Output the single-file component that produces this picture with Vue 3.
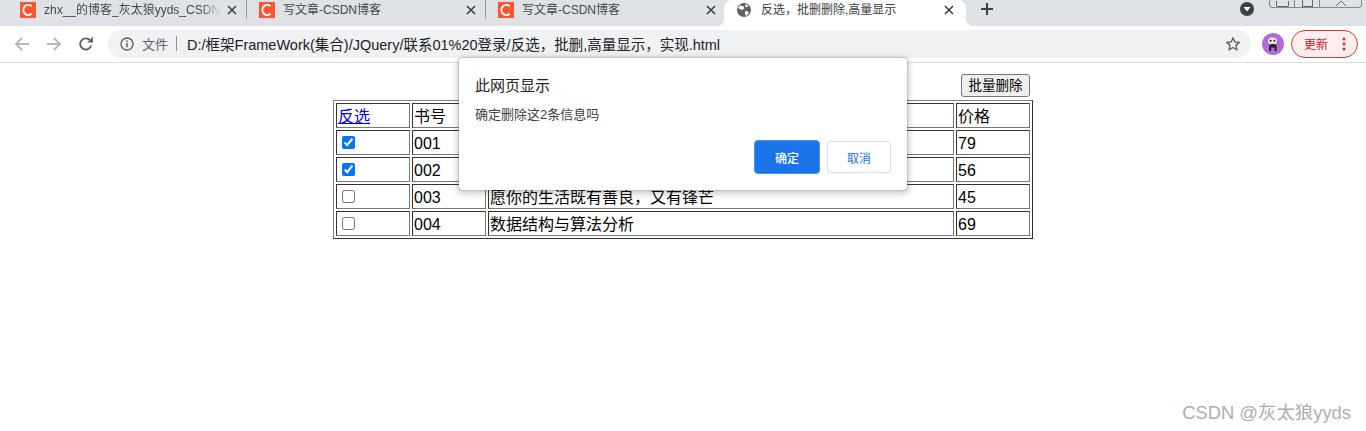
<script setup>
const tabs = [
  { title: 'zhx__的博客_灰太狼yyds_CSDN博客', fade: true },
  { title: '写文章-CSDN博客' },
  { title: '写文章-CSDN博客' },
]
const rows = [
  { id: '001', name: '', price: 79, checked: true },
  { id: '002', name: '', price: 56, checked: true },
  { id: '003', name: '愿你的生活既有善良，又有锋芒', price: 45, checked: false },
  { id: '004', name: '数据结构与算法分析', price: 69, checked: false },
]
</script>

<template>
  <div class="screen">
    <header class="strip">
      <div v-for="(t, i) in tabs" :key="i" class="tab">
        <svg class="fav" width="16" height="16" viewBox="0 0 16 16">
          <rect width="16" height="16" fill="#fc5531" />
          <path d="M11.6 4.2A5 5 0 1 0 11.6 11.8" fill="none" stroke="#fff" stroke-width="2" />
        </svg>
        <span class="tab-title" :class="{ fade: t.fade }">{{ t.title }}</span>
        <svg class="close" width="10" height="10" viewBox="0 0 10 10">
          <path d="M1 1l8 8M9 1l-8 8" stroke="#3c4043" stroke-width="1.6" />
        </svg>
      </div>
      <div class="tab active">
        <svg class="fav" width="14" height="14" viewBox="0 0 14 14">
          <circle cx="7" cy="7" r="7" fill="#5f6368" />
          <path d="M3 2.5l3 .5 1.5 2-2 2-3-1-1.3-1.5zM8 8l3 .6.8 1.4L9.5 13 8 11zM8.5 1l3 2-1.4 1.2-2-1z" fill="#fff" />
        </svg>
        <span class="tab-title">反选，批删删除,高量显示</span>
        <svg class="close" width="10" height="10" viewBox="0 0 10 10">
          <path d="M1 1l8 8M9 1l-8 8" stroke="#3c4043" stroke-width="1.6" />
        </svg>
      </div>
      <svg class="plus" width="14" height="14" viewBox="0 0 14 14">
        <path d="M7 1v12M1 7h12" stroke="#3c4043" stroke-width="2" />
      </svg>
      <div class="strip-right">
        <svg width="16" height="16" viewBox="0 0 16 16">
          <circle cx="8" cy="8" r="7" fill="#3c4043" />
          <path d="M4.5 6h7L8 10.5z" fill="#fff" />
        </svg>
        <div class="win-controls">
          <span class="win-btn first"><i class="w-min"></i></span>
          <span class="win-btn second"><i class="w-res"></i></span>
          <span class="win-btn third">
            <svg width="16" height="8" viewBox="0 0 16 8"><path d="M3 7l5-5 5 5" fill="none" stroke="#666" /></svg>
          </span>
        </div>
      </div>
    </header>

    <nav class="toolbar">
      <svg class="nav-ic back" width="16" height="16" viewBox="0 0 16 16">
        <path d="M15 8H2M8 2L2 8l6 6" fill="none" stroke="#b4b7bb" stroke-width="1.8" />
      </svg>
      <svg class="nav-ic forward" width="16" height="16" viewBox="0 0 16 16">
        <path d="M1 8h13M8 2l6 6-6 6" fill="none" stroke="#b4b7bb" stroke-width="1.8" />
      </svg>
      <svg class="nav-ic reload" width="16" height="16" viewBox="0 0 16 16">
        <path d="M13.2 9.5A5.6 5.6 0 1 1 12 4.2" fill="none" stroke="#5f6368" stroke-width="1.9" />
        <path d="M9.2 6.5H15V.8z" fill="#5f6368" />
      </svg>
      <div class="omnibox">
        <svg width="14" height="14" viewBox="0 0 14 14">
          <circle cx="7" cy="7" r="6" fill="none" stroke="#5f6368" stroke-width="1.4" />
          <path d="M7 6v4.2M7 3.6v1.4" stroke="#5f6368" stroke-width="1.5" />
        </svg>
        <span class="scheme">文件</span>
        <span class="divider"></span>
        <span class="url">D:/框架FrameWork(集合)/JQuery/联系01%20登录/反选，批删,高量显示，实现.html</span>
        <svg class="star" width="16" height="16" viewBox="0 0 16 16">
          <path d="M8 1.8l1.8 4.2 4.6.4-3.5 3 1.1 4.5L8 11.5l-4 2.4 1.1-4.5-3.5-3 4.6-.4z" fill="none" stroke="#5f6368" stroke-width="1.4" stroke-linejoin="round" />
        </svg>
      </div>
      <svg class="avatar" width="22" height="22" viewBox="0 0 22 22">
        <circle cx="11" cy="11" r="11" fill="#b36ad8" />
        <ellipse cx="10.5" cy="8" rx="4.5" ry="3.6" fill="#e8e8e8" />
        <circle cx="8.6" cy="7.8" r="1" fill="#222" />
        <circle cx="12.4" cy="7.8" r="1" fill="#222" />
        <path d="M7.2 18V13q0-2 3.6-2t3.8 2v5h-2v-3.5h-3.4V18z" fill="#222" />
      </svg>
      <div class="update">
        <span>更新</span>
        <svg width="4" height="14" viewBox="0 0 4 14">
          <circle cx="2" cy="2" r="1.5" fill="#d93025" />
          <circle cx="2" cy="7" r="1.5" fill="#d93025" />
          <circle cx="2" cy="12" r="1.5" fill="#d93025" />
        </svg>
      </div>
    </nav>

    <main class="page">
      <div class="content">
        <div class="actions"><button class="batch">批量删除</button></div>
        <table class="books">
          <colgroup>
            <col class="c1" /><col class="c2" /><col class="c3" /><col class="c4" />
          </colgroup>
          <tbody>
            <tr>
              <td><a class="invert" href="#">反选</a></td>
              <td>书号</td>
              <td></td>
              <td>价格</td>
            </tr>
            <tr v-for="r in rows" :key="r.id">
              <td><input type="checkbox" :checked="r.checked" /></td>
              <td>{{ r.id }}</td>
              <td>{{ r.name }}</td>
              <td>{{ r.price }}</td>
            </tr>
          </tbody>
        </table>
      </div>
      <div class="watermark">CSDN @灰太狼yyds</div>
    </main>

    <div class="dialog">
      <div class="d-title">此网页显示</div>
      <div class="d-msg">确定删除这2条信息吗</div>
      <div class="d-actions">
        <button class="ok">确定</button>
        <button class="cancel">取消</button>
      </div>
    </div>
  </div>
</template>

<style scoped>
.screen {
  position: relative;
  width: 1366px;
  height: 431px;
  overflow: hidden;
  background: #fff;
  font-family: "Liberation Sans", "Noto Sans CJK SC", sans-serif;
  color: #000;
}
.strip {
  display: flex;
  align-items: flex-start;
  height: 26px;
  padding-left: 8px;
  background: #dee1e6;
  box-sizing: border-box;
}
.tab {
  position: relative;
  display: flex;
  align-items: center;
  width: 239px;
  height: 19px;
  padding: 0 9px 0 12px;
  box-sizing: border-box;
  flex: none;
  border-right: 1px solid #9a9da1;
}
.tab:nth-child(3) {
  border-right: none;
}
.tab.active {
  width: 242px;
  height: 26px;
  margin-left: -1px;
  padding: 0 12px 7px 13px;
  background: #fff;
  border-right: none;
  border-radius: 8px 8px 0 0;
}
.tab.active::before,
.tab.active::after {
  content: "";
  position: absolute;
  bottom: 0;
  width: 8px;
  height: 8px;
}
.tab.active::before {
  left: -8px;
  background: radial-gradient(circle at 0 0, #dee1e6 8px, #fff 8.5px);
}
.tab.active::after {
  right: -8px;
  background: radial-gradient(circle at 100% 0, #dee1e6 8px, #fff 8.5px);
}
.fav {
  flex: none;
}
.tab-title {
  flex: 1;
  min-width: 0;
  margin-left: 8px;
  overflow: hidden;
  white-space: nowrap;
  font-size: 12px;
  line-height: 18px;
  color: #45484c;
}
.tab-title.fade {
  -webkit-mask-image: linear-gradient(to right, #000 88%, transparent 100%);
  mask-image: linear-gradient(to right, #000 88%, transparent 100%);
}
.active .tab-title {
  margin-left: 10px;
  color: #3c4043;
}
.close {
  flex: none;
  margin-left: 6px;
}
.plus {
  flex: none;
  margin: 2px 0 0 14px;
}
.strip-right {
  display: flex;
  align-items: flex-start;
  margin-left: auto;
  margin-right: 4px;
}
.strip-right > svg {
  margin-top: 1px;
}
.win-controls {
  display: flex;
  width: 93px;
  height: 8px;
  margin-left: 14px;
  border: 1px solid #85888c;
  border-top: none;
  border-radius: 0 0 4px 4px;
  box-sizing: border-box;
}
.win-btn {
  display: flex;
  justify-content: center;
  align-items: flex-end;
  overflow: hidden;
  box-sizing: border-box;
  border-right: 1px solid #85888c;
}
.first { width: 25px; }
.second { width: 25px; }
.third { flex: 1; border-right: none; }
.w-min {
  display: block;
  width: 13px;
  height: 6px;
  border: 1px solid #666;
  border-top-width: 0;
  box-sizing: border-box;
  border-radius: 0 0 2px 2px;
}
.w-res {
  display: block;
  width: 11px;
  height: 7px;
  border: 1px solid #666;
  border-top-width: 0;
  box-sizing: border-box;
}
.toolbar {
  display: flex;
  align-items: center;
  height: 37px;
  padding-bottom: 1px;
  background: #fff;
  border-bottom: 1px solid #dadce0;
  box-sizing: border-box;
}
.nav-ic {
  flex: none;
}
.back { margin-left: 14px; }
.forward { margin-left: 16px; }
.reload { margin-left: 16px; }
.omnibox {
  display: flex;
  align-items: center;
  width: 1143px;
  height: 28px;
  margin-left: 14px;
  padding-left: 12px;
  background: #eff1f3;
  border-radius: 14px;
  box-sizing: border-box;
  flex: none;
}
.scheme {
  margin-left: 8px;
  font-size: 13px;
  color: #5f6368;
}
.divider {
  width: 1px;
  height: 15px;
  margin: 0 10px 0 8px;
  background: #8d9195;
}
.url {
  font-size: 14.5px;
  color: #202124;
  white-space: nowrap;
}
.star {
  margin-left: auto;
  margin-right: 10px;
}
.avatar {
  flex: none;
  margin-left: 11px;
}
.update {
  display: flex;
  align-items: center;
  justify-content: space-between;
  width: 67px;
  height: 28px;
  margin-left: 7px;
  padding: 0 11px 0 12px;
  background: #fdeeee;
  border: 1px solid #d33a30;
  border-radius: 14px;
  box-sizing: border-box;
  font-size: 12px;
  color: #c5221f;
  flex: none;
}
.page {
  position: relative;
  height: 368px;
}
.content {
  width: 700px;
  margin-left: 333px;
  padding-top: 11px;
}
.actions {
  display: flex;
  justify-content: flex-end;
  height: 23px;
  margin-bottom: 3px;
  padding-right: 3px;
}
.batch {
  width: 69px;
  height: 23px;
  padding: 0;
  background: #efefef;
  border: 1px solid #767676;
  border-radius: 3px;
  font-family: inherit;
  font-size: 13.5px;
  line-height: 20px;
  color: #000;
}
.books {
  table-layout: fixed;
  width: 700px;
  border-collapse: separate;
  border-spacing: 2px;
  border: 1px solid;
  border-color: #808080 #333 #333 #808080;
  box-sizing: border-box;
}
.c1 { width: 74px; }
.c2 { width: 74px; }
.c3 { width: 466px; }
.c4 { width: 74px; }
.books td {
  height: 25px;
  padding: 2px 1px 0;
  box-sizing: border-box;
  border: 1px solid;
  border-color: #333 #777 #777 #333;
  font-size: 16px;
  line-height: 21px;
  white-space: nowrap;
  overflow: hidden;
}
.invert {
  color: #0000ee;
  text-decoration: underline;
}
.books input {
  display: block;
  width: 13px;
  height: 13px;
  margin: 1px 3px 3px 4px;
}
.watermark {
  position: absolute;
  right: 15px;
  top: 338px;
  font-size: 18.4px;
  line-height: 24px;
  color: #aeaeae;
  white-space: nowrap;
}
.dialog {
  position: absolute;
  left: 459px;
  top: 58px;
  width: 448px;
  height: 132px;
  padding: 0 16px;
  background: #fff;
  border-radius: 4px;
  box-sizing: border-box;
  box-shadow: 0 0 2px rgba(60, 64, 67, 0.55), 0 2px 6px 2px rgba(60, 64, 67, 0.25);
}
.d-title {
  margin-top: 18px;
  font-size: 15px;
  line-height: 20px;
  color: #202124;
}
.d-msg {
  margin-top: 10px;
  font-size: 13px;
  line-height: 18px;
  color: #3c4043;
}
.d-actions {
  display: flex;
  justify-content: flex-end;
  align-items: center;
  gap: 7px;
  margin-top: 16px;
}
.d-actions button {
  padding: 0;
  font-family: inherit;
  font-size: 12px;
  border-radius: 4px;
}
.ok {
  width: 66px;
  height: 34px;
  background: #1a73e8;
  border: 1px solid #4a90ee;
  color: #fff;
  font-weight: 500;
}
.cancel {
  width: 64px;
  height: 32px;
  background: #fff;
  border: 1px solid #dadce0;
  color: #1a73e8;
}
</style>
